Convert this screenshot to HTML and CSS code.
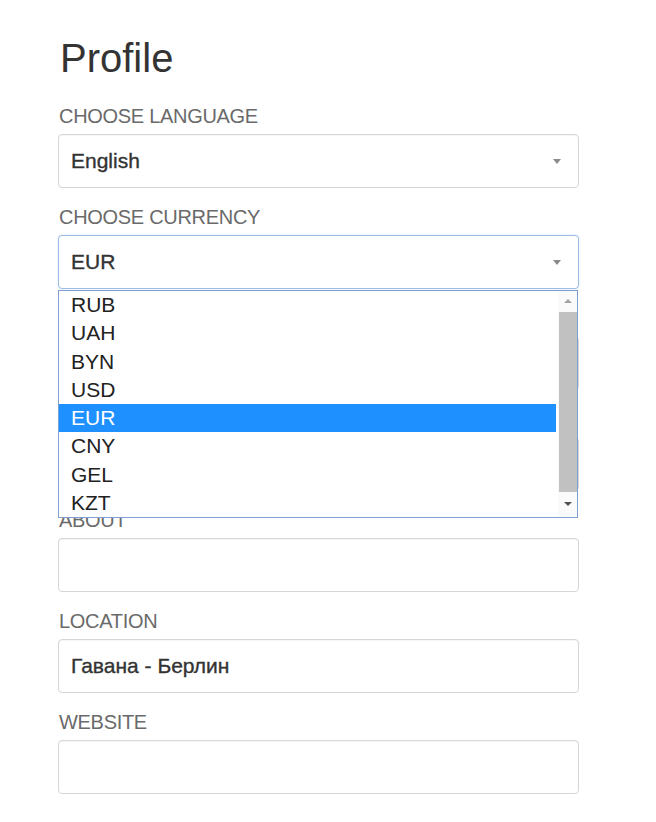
FILE: index.html
```html
<!DOCTYPE html>
<html lang="en">
<head>
<meta charset="utf-8">
<title>Profile</title>
<link rel="stylesheet" href="styles.css">
</head>
<body>
<main class="page">
  <h1 class="title">Profile</h1>
  <form class="form">
    <div class="group">
      <label class="label">CHOOSE LANGUAGE</label>
      <div class="field select">
        <span class="value">English</span>
        <span class="caret"></span>
      </div>
    </div>
    <div class="group">
      <label class="label">CHOOSE CURRENCY</label>
      <div class="select-wrap">
        <div class="field select focused">
          <span class="value">EUR</span>
          <span class="caret"></span>
        </div>
        <div class="dropdown">
          <ul class="options">
            <li class="option">RUB</li>
            <li class="option">UAH</li>
            <li class="option">BYN</li>
            <li class="option">USD</li>
            <li class="option active">EUR</li>
            <li class="option">CNY</li>
            <li class="option">GEL</li>
            <li class="option">KZT</li>
          </ul>
          <div class="scrollbar">
            <span class="arrow up"></span>
            <span class="thumb"></span>
            <span class="arrow down"></span>
          </div>
        </div>
      </div>
    </div>
    <div class="group">
      <span class="label label-empty"></span>
      <div class="field"></div>
    </div>
    <div class="group">
      <span class="label label-empty"></span>
      <div class="field"></div>
    </div>
    <div class="group">
      <label class="label">ABOUT</label>
      <div class="field"></div>
    </div>
    <div class="group">
      <label class="label">LOCATION</label>
      <div class="field"><span class="value">Гавана - Берлин</span></div>
    </div>
    <div class="group">
      <label class="label">WEBSITE</label>
      <div class="field"></div>
    </div>
  </form>
</main>
</body>
</html>
```

FILE: styles.css
```css
* { box-sizing: border-box; }

html, body {
  margin: 0;
  padding: 0;
  background: #ffffff;
}

body {
  font-family: "Liberation Sans", Arial, Helvetica, sans-serif;
  color: #333333;
}

.page {
  width: 521px;
  margin-left: 58px;
  padding-top: 36px;
}

.title {
  margin: 0 0 0 2px;
  font-size: 40px;
  line-height: 44px;
  font-weight: normal;
  color: #333333;
}

.form {
  display: flex;
  flex-direction: column;
  gap: 17px;
  margin-top: 24px;
}

.group {
  display: flex;
  flex-direction: column;
  gap: 6px;
}

.label {
  display: block;
  margin-left: 1px;
  height: 24px;
  font-size: 20px;
  line-height: 24px;
  color: #6a6a6a;
  letter-spacing: -0.3px;
  font-weight: 300;
}

.field {
  height: 54px;
  border: 1px solid #d6d6d6;
  border-radius: 4px;
  background: #ffffff;
  display: flex;
  align-items: center;
  padding: 0 12px;
  box-shadow: inset 0 1px 1px rgba(0,0,0,0.04);
}

.value {
  font-size: 21px;
  color: #333333;
  -webkit-text-stroke: 0.35px #333333;
}

.select {
  justify-content: space-between;
}

.caret {
  width: 0;
  height: 0;
  margin-right: 5px;
  border-left: 4px solid transparent;
  border-right: 4px solid transparent;
  border-top: 5px solid #8a8a8a;
}

.focused {
  border-color: #9dbde6;
  box-shadow: 0 0 2px rgba(102, 150, 220, 0.3);
}

.select-wrap {
  position: relative;
}

.dropdown {
  position: absolute;
  top: 55px;
  left: 0;
  width: 520px;
  height: 228px;
  border: 1px solid #7f9fd0;
  background: #ffffff;
  display: flex;
  z-index: 10;
}

.options {
  list-style: none;
  margin: 0;
  padding: 0;
  flex: 1;
  margin-right: 2px;
}

.option {
  height: 28.25px;
  line-height: 28.25px;
  padding-left: 12px;
  font-size: 21px;
  color: #222222;
}

.option.active {
  background: #1e90ff;
  color: #ffffff;
}

.scrollbar {
  width: 19px;
  background: #fafafa;
  display: flex;
  flex-direction: column;
  align-items: center;
}

.arrow {
  width: 0;
  height: 0;
  border-left: 4px solid transparent;
  border-right: 4px solid transparent;
}

.arrow.up {
  margin-top: 8px;
  border-bottom: 4px solid #a3a3a3;
}

.arrow.down {
  margin-top: 10px;
  border-top: 4px solid #505050;
}

.thumb {
  margin-top: 9px;
  width: 18px;
  height: 180px;
  background: #c1c1c1;
}
```
